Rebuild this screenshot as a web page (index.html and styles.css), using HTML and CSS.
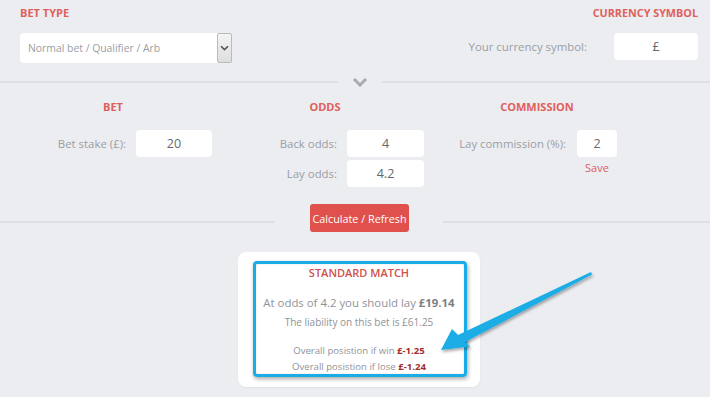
FILE: index.html
```html
<!DOCTYPE html>
<html>
<head>
<meta charset="utf-8">
<link rel="stylesheet" href="styles.css">
</head>
<body>
<div class="page">
  <section class="top">
    <div class="top-left">
      <h2 class="heading">BET TYPE</h2>
      <div class="select">
        <span class="select-text">Normal bet / Qualifier / Arb</span>
        <span class="select-btn">
          <svg width="9" height="6" viewBox="0 0 9 6"><path d="M1 1.2 L4.5 4.6 L8 1.2" fill="none" stroke="#555" stroke-width="1.6"/></svg>
        </span>
      </div>
    </div>
    <div class="top-right">
      <h2 class="heading">CURRENCY SYMBOL</h2>
      <div class="field">
        <label class="label">Your currency symbol:</label>
        <div class="input input-currency">£</div>
      </div>
    </div>
  </section>

  <div class="divider">
    <span class="line line-l1"></span>
    <svg class="chev" width="16" height="10" viewBox="0 0 16 10"><path d="M2 2 L8 8 L14 2" fill="none" stroke="#a9abb0" stroke-width="3"/></svg>
    <span class="line line-r1"></span>
  </div>

  <section class="inputs">
    <div class="col">
      <h3 class="heading center">BET</h3>
      <div class="field">
        <label class="label w-bet">Bet stake (£):</label>
        <div class="input w-76">20</div>
      </div>
    </div>
    <div class="col">
      <h3 class="heading center">ODDS</h3>
      <div class="field">
        <label class="label w-odds">Back odds:</label>
        <div class="input w-77">4</div>
      </div>
      <div class="field field-gap">
        <label class="label w-odds">Lay odds:</label>
        <div class="input w-77">4.2</div>
      </div>
    </div>
    <div class="col">
      <h3 class="heading center">COMMISSION</h3>
      <div class="field">
        <label class="label w-comm">Lay commission (%):</label>
        <div class="comm-box">
          <div class="input w-40">2</div>
          <a class="save">Save</a>
        </div>
      </div>
    </div>
  </section>

  <div class="divider2">
    <span class="line line-l2"></span>
    <button class="btn">Calculate / Refresh</button>
    <span class="line line-r2"></span>
  </div>

  <section class="result-wrap">
    <div class="card">
      <h4 class="card-title">STANDARD MATCH</h4>
      <p class="lay">At odds of 4.2 you should lay <b>£19.14</b></p>
      <p class="liab">The liability on this bet is £61.25</p>
      <p class="pos">Overall posistion if win <b>£-1.25</b></p>
      <p class="pos">Overall posistion if lose <b>£-1.24</b></p>
      <div class="highlight"></div>
    </div>
  </section>

  <svg class="arrow" width="710" height="397" viewBox="0 0 710 397">
    <defs>
      <filter id="sh" x="-10%" y="-10%" width="130%" height="140%">
        <feDropShadow dx="1" dy="2" stdDeviation="1.6" flood-color="#000" flood-opacity="0.35"/>
      </filter>
    </defs>
    <polygon filter="url(#sh)" fill="#1aace6" points="591,272 592,274.5 465,342 470,346.5 441,350 452,329 458,335"/>
  </svg>
</div>
</body>
</html>
```
FILE: styles.css
```css
* { box-sizing: border-box; }
html, body { margin: 0; padding: 0; }
body {
  background: #ecedf1;
  font-family: "Open Sans", "Liberation Sans", sans-serif;
  color: #9a9ea5;
  width: 710px;
  height: 397px;
  overflow: hidden;
}
.page { position: relative; width: 710px; height: 397px; }

.heading {
  margin: 0;
  font-size: 11px;
  font-weight: 700;
  line-height: 14px;
  color: #e0605b;
}
.top-right .heading { font-size: 10.8px; }
.center { text-align: center; }

.top {
  display: flex;
  justify-content: space-between;
  padding: 6px 12px 0 20px;
  height: 74px;
}
.top-left .select { margin-top: 13px; }
.top-right { display: flex; flex-direction: column; align-items: flex-end; }
.top-right .field { margin-top: 13px; }

.select {
  width: 212px;
  height: 30px;
  background: #fff;
  border-radius: 4px;
  display: flex;
  align-items: center;
  justify-content: space-between;
  padding-left: 8px;
  font-size: 10.4px;
  color: #9a9ea5;
}
.select-btn {
  width: 15px;
  height: 30px;
  border: 1px solid #b9bbbf;
  background: linear-gradient(#f4f4f4, #dedede);
  border-radius: 2px;
  display: flex;
  align-items: center;
  justify-content: center;
}

.field { display: flex; align-items: flex-start; }
.label {
  font-size: 11.4px;
  line-height: 27px;
  color: #9a9ea5;
  text-align: right;
}
.top-right .label { margin-right: 27px; }
.input {
  height: 27px;
  background: #fff;
  border-radius: 4px;
  font-size: 12.5px;
  line-height: 27px;
  text-align: center;
  color: #64686d;
}
.input-currency { width: 84px; }

.divider {
  display: flex;
  align-items: center;
  height: 16px;
}
.line { height: 2px; background: #dfe0e4; display: block; }
.line-l1 { width: 338px; }
.chev { margin: 0 14px 0 14px; }
.line-r1 { flex: 1; }

.inputs {
  display: grid;
  grid-template-columns: 212px 212px 212px;
  padding-left: 7px;
  margin-top: 10px;
  height: 118px;
}
.col .heading { margin-bottom: 16px; }
.field-gap { margin-top: 3px; }
.w-bet { width: 119px; margin-right: 10px; }
.w-odds { width: 118px; margin-right: 10px; }
.w-comm { width: 135px; margin-right: 11px; }
.w-76 { width: 76px; }
.w-77 { width: 77px; }
.w-40 { width: 40px; }
.comm-box { display: flex; flex-direction: column; align-items: center; }
.save {
  font-size: 11px;
  color: #e0605b;
  margin-top: 3px;
  line-height: 16px;
}

.divider2 {
  display: flex;
  align-items: center;
  height: 28px;
  margin-top: -14px;
}
.line-l2 { width: 275px; margin-top: 7px; }
.line-r2 { flex: 1; margin-top: 7px; }
.btn {
  margin: 0 34px 0 35px;
  width: 99px;
  height: 28px;
  border: 0;
  border-radius: 3px;
  background: #e0504c;
  color: #fff;
  font-family: "Open Sans", "Liberation Sans", sans-serif;
  font-size: 10.8px;
  white-space: nowrap;
  padding: 0;
}

.result-wrap {
  display: flex;
  justify-content: center;
  padding-left: 8px;
  margin-top: 20px;
}
.card {
  position: relative;
  width: 242px;
  height: 135px;
  background: #fff;
  border-radius: 8px;
  box-shadow: 0 1px 2px rgba(0,0,0,0.05);
  text-align: center;
  padding-top: 14px;
}
.card-title {
  margin: 0;
  font-size: 11px;
  font-weight: 600;
  color: #d0504c;
  line-height: 14px;
}
.card p { margin: 0; }
.lay {
  margin-top: 14px !important;
  font-size: 11.4px;
  line-height: 18px;
  color: #8f939a;
}
.lay b { color: #7b7f85; }
.liab {
  margin-top: 3px !important;
  font-size: 10px;
  line-height: 14px;
  color: #8f939a;
}
.pos {
  font-size: 9.6px;
  line-height: 16px;
  color: #8f939a;
}
.liab + .pos { margin-top: 14px !important; }
.pos b { color: #a3302c; }

.highlight {
  position: absolute;
  left: 15px;
  top: 9px;
  right: 13px;
  bottom: 10px;
  border: 3px solid #1aace6;
  border-radius: 4px;
  box-shadow: 1px 2px 4px rgba(0,0,0,0.35), inset 0 0 2px rgba(0,0,0,0.15);
}

.arrow { position: absolute; left: 0; top: 0; pointer-events: none; }
```
